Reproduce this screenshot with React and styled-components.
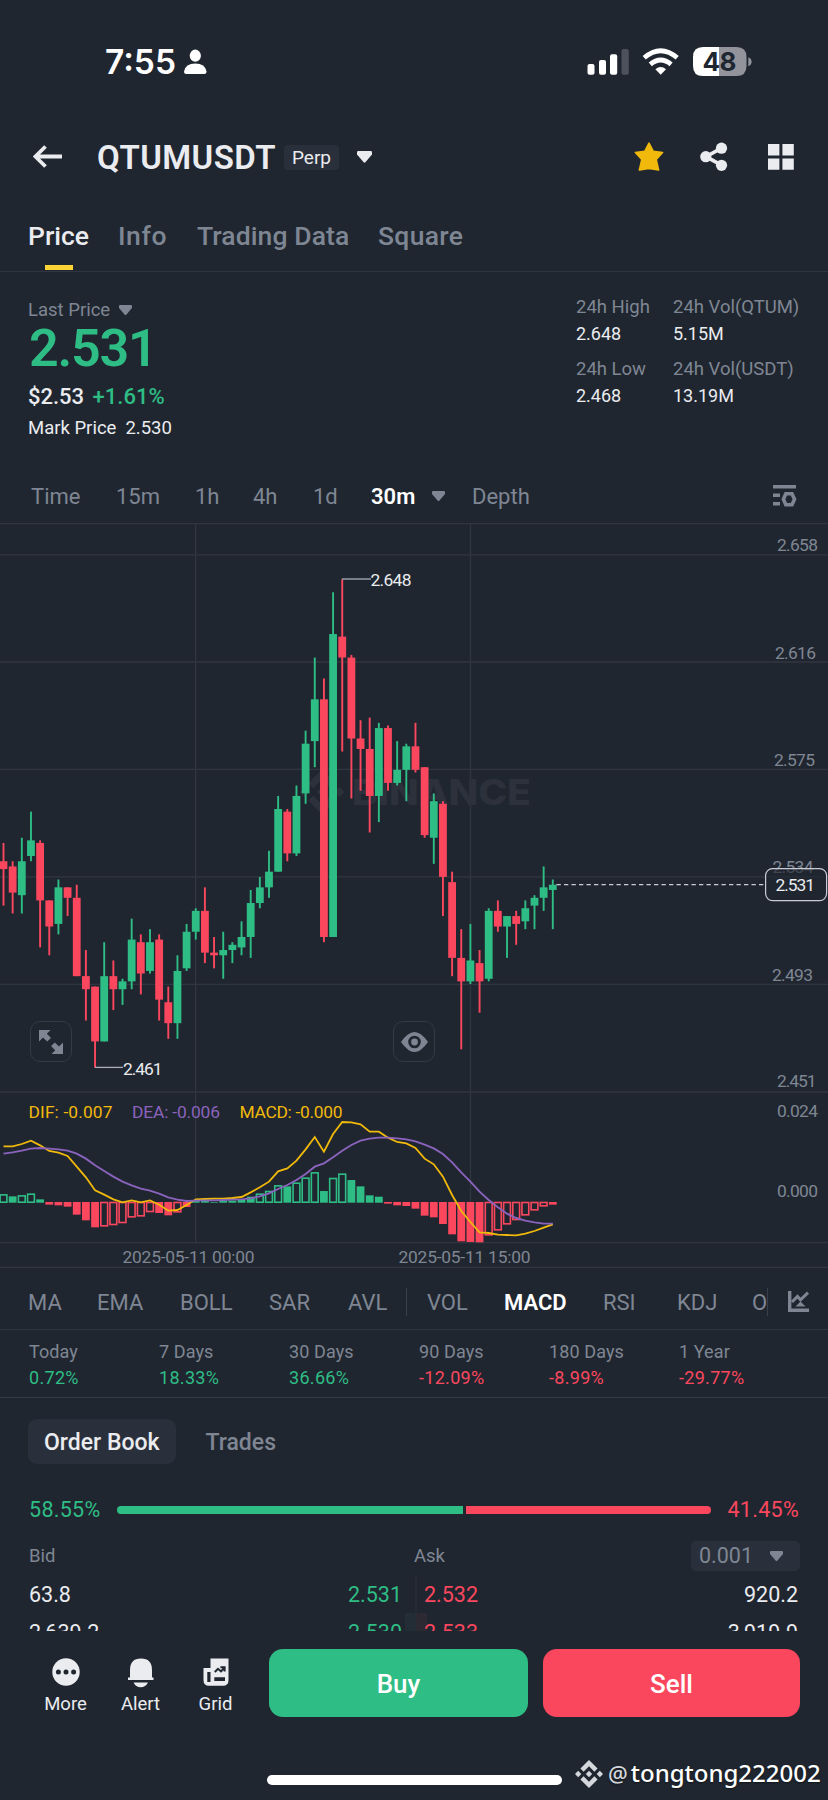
import React from "react";
import styled, { createGlobalStyle } from "styled-components";

const UP = "#2ebd85";
const DOWN = "#fa475e";
const GOLD = "#f0b90b";
const PURPLE = "#8a63bd";
const MUTED = "#7f8693";
const GRID = "#303641";

// high, body top, body bottom, low (price * 1000), 1 = up
const CANDLES = [
  [2547, 2540, 2537, 2523, 0], [2540, 2538, 2528, 2520, 0], [2549, 2540, 2527, 2520, 1],
  [2559, 2548, 2542, 2540, 1], [2548, 2547, 2525, 2507, 0], [2525, 2525, 2515, 2504, 0],
  [2533, 2530, 2516, 2512, 1], [2530, 2530, 2526, 2519, 0], [2531, 2526, 2496, 2496, 0],
  [2506, 2496, 2491, 2479, 0], [2492, 2492, 2471, 2461, 0], [2509, 2496, 2471, 2471, 1],
  [2502, 2496, 2491, 2483, 0], [2495, 2494, 2491, 2485, 1], [2518, 2510, 2494, 2491, 1],
  [2512, 2509, 2497, 2489, 0], [2514, 2509, 2498, 2497, 1], [2512, 2510, 2487, 2479, 0],
  [2492, 2486, 2478, 2472, 0], [2504, 2498, 2478, 2472, 1], [2516, 2513, 2499, 2498, 1],
  [2522, 2521, 2513, 2510, 1], [2530, 2521, 2505, 2501, 0], [2511, 2505, 2504, 2499, 0],
  [2513, 2506, 2504, 2495, 1], [2509, 2508, 2506, 2501, 1], [2517, 2511, 2507, 2504, 1],
  [2529, 2524, 2511, 2503, 1], [2534, 2530, 2524, 2522, 1], [2544, 2536, 2530, 2526, 1],
  [2565, 2560, 2536, 2536, 1], [2560, 2559, 2543, 2540, 0], [2569, 2565, 2543, 2542, 1],
  [2590, 2585, 2566, 2562, 1], [2618, 2602, 2586, 2576, 1], [2610, 2602, 2511, 2509, 0],
  [2643, 2627, 2511, 2511, 1], [2648, 2626, 2618, 2582, 0], [2619, 2618, 2587, 2564, 0],
  [2594, 2587, 2583, 2567, 0], [2595, 2583, 2565, 2551, 0], [2593, 2591, 2565, 2555, 1],
  [2592, 2591, 2570, 2567, 0], [2586, 2575, 2570, 2569, 1], [2585, 2584, 2575, 2563, 1],
  [2593, 2584, 2575, 2574, 0], [2576, 2576, 2550, 2549, 0], [2566, 2563, 2549, 2539, 1],
  [2563, 2562, 2534, 2519, 0], [2536, 2532, 2503, 2496, 0], [2514, 2503, 2494, 2468, 0],
  [2516, 2502, 2494, 2493, 1], [2506, 2501, 2494, 2482, 0], [2522, 2521, 2495, 2494, 1],
  [2525, 2521, 2515, 2513, 0], [2519, 2519, 2515, 2503, 1], [2521, 2519, 2516, 2508, 0],
  [2525, 2522, 2517, 2514, 1], [2527, 2526, 2523, 2514, 1], [2538, 2530, 2526, 2521, 1],
  [2533, 2531, 2529, 2514, 1],
];

// histogram heights in thirds of a pixel, negative is below zero
const HIST = [
  25, 19, 22, 27, 10, -8, -10, -14, -38, -55, -76, -73, -69, -63, -46, -43, -30, -33, -40, -31,
  -15, 5, 5, 2, 5, 6, 10, 18, 27, 35, 52, 49, 60, 75, 91, 35, 74, 87, 68, 49, 22, 18, -5, -10,
  -12, -20, -41, -46, -66, -97, -118, -120, -121, -100, -85, -67, -54, -40, -25, -13, -8,
];
const HOLLOW = [0, 2, 3, 11, 12, 13, 14, 15, 16, 19, 28, 29, 30, 32, 33, 34, 36, 37, 53, 54, 55, 56, 57, 58, 59];

const DIF = [
  169, 169, 162, 152, 166, 183, 188, 198, 230, 262, 301, 314, 328, 337, 331, 337, 331, 344, 362,
  360, 345, 328, 327, 326, 326, 324, 321, 307, 292, 275, 244, 235, 212, 178, 141, 185, 132, 96,
  97, 103, 125, 125, 143, 156, 160, 174, 206, 223, 260, 315, 363, 396, 427, 429, 434, 435, 436,
  431, 423, 413, 403,
];
const DEA = [
  191, 187, 182, 176, 174, 176, 178, 182, 191, 206, 226, 243, 260, 275, 286, 296, 302, 311, 322,
  329, 333, 332, 331, 331, 330, 329, 328, 325, 319, 310, 297, 285, 270, 252, 230, 220, 202, 182,
  165, 152, 146, 143, 143, 145, 148, 154, 164, 175, 192, 217, 247, 275, 305, 330, 352, 371, 384,
  392, 397, 401, 401,
];

const AXIS = [
  ["2.658", 777, 551.3], ["2.616", 775, 658.6], ["2.575", 774, 765.6], ["2.534", 772.5, 873],
  ["2.493", 772, 980.8], ["2.451", 777, 1086.6], ["0.024", 777, 1116.5], ["0.000", 777, 1197],
];

const PERIODS = [
  ["Today", "0.72%"], ["7 Days", "18.33%"], ["30 Days", "36.66%"],
  ["90 Days", "-12.09%"], ["180 Days", "-8.99%"], ["1 Year", "-29.77%"],
];

const candleX = (i) => 3.5 + i * 9.155;
const priceY = (p) => 579.2 + (2648 - p) * 2.6115;
const toPoints = (list) => list.map((v, i) => `${candleX(i)},${1090 + v / 3}`).join(" ");

const Caret = ({ size = 14, color = MUTED }) => (
  <svg width={size} height={(size * 11) / 14} viewBox="0 0 14 11">
    <path
      d="M0 1.2Q0 0 1.2 0H12.8Q14 0 14 1.2V3.2L7.8 10.5Q7 11.3 6.2 10.5L0 3.2Z"
      fill={color}
    />
  </svg>
);

const BINANCE_PATH =
  "M16.624 13.9202l2.7175 2.7154-7.353 7.353-7.353-7.352 2.7175-2.7164 4.6355 4.6595 4.6356-4.6595zm4.6366-4.6366L24 12l-2.7154 2.7164L18.5682 12l2.6924-2.7164zm-9.272.001l2.7163 2.6914-2.7164 2.7174v-.001L9.2721 12l2.7164-2.7154zm-9.2722-.001L5.4088 12l-2.6914 2.6924L0 12l2.7164-2.7164zM11.9885.0115l7.353 7.329-2.7174 2.7154-4.6356-4.6356-4.6355 4.6595-2.7174-2.7154 7.353-7.353z";

const StatusIcons = () => (
  <svg width="166" height="32" viewBox="586 45 166 32">
    <rect x="587.5" y="63" width="7" height="10.8" rx="2" fill="#fff" />
    <rect x="599" y="59" width="7" height="14.8" rx="2" fill="#fff" />
    <rect x="610" y="53.3" width="7.2" height="20.5" rx="2" fill="#fff" />
    <rect x="621.5" y="48" width="7.3" height="25.8" rx="2" fill="#4d515b" />
    <g fill="none" stroke="#fff" strokeWidth="4.8">
      <path d="M644.2 56.8Q660.7 42.6 677.2 56.8" />
      <path d="M650.3 63.4Q660.7 54.6 671.1 63.4" />
    </g>
    <path d="M660.7 73.8L655.4 68.3Q660.7 63.6 666 68.3Z" fill="#fff" />
    <path d="M703 46H719V75H703Q693 75 693 65V56Q693 46 703 46Z" fill="#fff" />
    <path d="M719 46H736.5Q746.5 46 746.5 56V65Q746.5 75 736.5 75H719Z" fill="#92939b" />
    <path d="M748.3 56.2Q751.6 57.5 751.6 60.7Q751.6 63.9 748.3 65.2Z" fill="#92939b" />
    <text
      x="702.5"
      y="70"
      fontFamily="Inter, sans-serif"
      fontSize="26"
      fontWeight="700"
      fill="#202630"
      textLength="34"
    >
      48
    </text>
  </svg>
);

const Chart = () => (
  <ChartSvg viewBox="0 523 828 745">
    <g stroke={GRID} strokeWidth="1.3">
      {[523.7, 554.8, 662, 769.3, 876.9, 984.3, 1092, 1242.6, 1267.4].map((y) => (
        <line key={y} x1="0" x2="828" y1={y} y2={y} />
      ))}
      <line x1="195.6" x2="195.6" y1="523" y2="1242.6" />
      <line x1="470.5" x2="470.5" y1="523" y2="1242.6" />
    </g>
    <g fill="#2c313c">
      <path transform="translate(299.5 769.5) scale(1.87)" d={BINANCE_PATH} />
      <text
        x="352"
        y="805"
        fontFamily="Inter, sans-serif"
        fontSize="35"
        fontWeight="800"
        textLength="179"
        lengthAdjust="spacingAndGlyphs"
      >
        BINANCE
      </text>
    </g>
    {CANDLES.map(([h, t, b, l, up], i) => {
      const x = candleX(i);
      return (
        <g key={i} fill={up ? UP : DOWN}>
          <rect x={x - 0.95} y={priceY(h)} width="1.9" height={priceY(l) - priceY(h)} />
          <rect x={x - 3.9} y={priceY(t)} width="7.8" height={priceY(b) - priceY(t)} />
        </g>
      );
    })}
    <path d="M342 579H371" stroke="#a9aebb" strokeWidth="1.3" />
    <path d="M95 1067.4H123" stroke="#a9aebb" strokeWidth="1.3" />
    <ChartText $light x="370.5" y="585.6" textLength="41">2.648</ChartText>
    <ChartText $light x="123" y="1074.6" textLength="39.5">2.461</ChartText>
    {HIST.map((v, i) => {
      const hollow = HOLLOW.includes(i);
      const color = v > 0 ? UP : DOWN;
      const height = Math.abs(v) / 3;
      const top = v > 0 ? 1202.7 - height : 1202;
      const inset = hollow ? 0.5 : 0;
      return (
        <rect
          key={i}
          x={candleX(i) - 3.9 + inset}
          y={top + inset}
          width={7.8 - inset * 2}
          height={height - inset * 2}
          fill={hollow ? "none" : color}
          stroke={hollow ? color : "none"}
          strokeWidth="1.6"
        />
      );
    })}
    <polyline points={toPoints(DIF)} fill="none" stroke={GOLD} strokeWidth="1.8" />
    <polyline points={toPoints(DEA)} fill="none" stroke={PURPLE} strokeWidth="1.9" />
    <ChartText x="28.5" y="1118.3" textLength="84" fill={GOLD}>DIF: -0.007</ChartText>
    <ChartText x="132" y="1118.3" textLength="88" fill={PURPLE}>DEA: -0.006</ChartText>
    <ChartText x="239.5" y="1118.3" textLength="103" fill={GOLD}>MACD: -0.000</ChartText>
    {AXIS.map(([label, x, y]) => (
      <ChartText key={label} x={x} y={y} textLength={label === "2.451" ? 39.5 : 41}>
        {label}
      </ChartText>
    ))}
    <ChartText x="122.5" y="1263.4" textLength="132">2025-05-11 00:00</ChartText>
    <ChartText x="398.5" y="1263.4" textLength="132">2025-05-11 15:00</ChartText>
    <path d="M556.5 884.6H765" stroke="#c9ccd6" strokeWidth="1.2" strokeDasharray="4.3 3.2" />
    <rect
      x="765.6"
      y="868.6"
      width="61"
      height="32"
      rx="7"
      fill="#202630"
      fillOpacity="0.65"
      stroke="#c9ccd6"
      strokeWidth="1.2"
    />
    <ChartText $light x="775.5" y="891.4" textLength="39.5">2.531</ChartText>
  </ChartSvg>
);

export default function App() {
  return (
    <Screen>
      <GlobalStyle />
      <StatusBar>
        <Clock>7:55</Clock>
        <svg width="23" height="26" viewBox="0 0 23 26">
          <ellipse cx="11.3" cy="6.7" rx="5.6" ry="6.1" fill="#fff" />
          <path d="M0 22.5Q1.5 14.5 11.3 14.5T22.5 22.5Q22.5 25 20 25H2.5Q0 25 0 22.5Z" fill="#fff" />
        </svg>
        <Spacer />
        <StatusIcons />
      </StatusBar>

      <Header>
        <svg width="30" height="24" viewBox="0 0 30 24">
          <path d="M2 11.5H29M12.5 1.5L2.4 11.5L12.5 21.5" fill="none" stroke="#eaecef" strokeWidth="3.8" />
        </svg>
        <Symbol>QTUMUSDT</Symbol>
        <PerpBadge>Perp</PerpBadge>
        <Caret size={15} color="#eaecef" />
        <Spacer />
        <svg width="30" height="30" viewBox="0 0 30 30">
          <path
            d="M15 1.2L19.3 9.4L28.6 10.5L22.2 17.4L24.6 28L15 26.4L5.4 28L7.8 17.4L1.4 10.5L10.7 9.4Z"
            fill={GOLD}
            stroke={GOLD}
            strokeWidth="1.6"
            strokeLinejoin="round"
          />
        </svg>
        <svg width="28" height="30" viewBox="0 0 28 30">
          <path d="M21.5 6.2L6 14.7L21.5 23.2" fill="none" stroke="#eaecef" strokeWidth="3.6" />
          <circle cx="21.5" cy="6.2" r="5.6" fill="#eaecef" />
          <circle cx="5.8" cy="14.7" r="5.6" fill="#eaecef" />
          <circle cx="21.5" cy="23.3" r="5.6" fill="#eaecef" />
        </svg>
        <svg width="26" height="26" viewBox="0 0 26 26">
          <path d="M0 0H11.4V11.4H0ZM14.4 0H25.8V11.4H14.4ZM0 14.4H11.4V25.8H0ZM14.4 14.4H25.8V25.8H14.4Z" fill="#eaecef" />
        </svg>
      </Header>

      <PageTabs>
        <PageTab $active>Price</PageTab>
        <PageTab $spacing={0.6}>Info</PageTab>
        <PageTab $spacing={0.1}>Trading Data</PageTab>
        <PageTab $spacing={0.3}>Square</PageTab>
      </PageTabs>

      <Summary>
        <LastPrice>
          <PriceLabel>
            Last Price <Caret size={13} />
          </PriceLabel>
          <BigPrice>2.531</BigPrice>
          <FiatLine>
            $2.53 <Change>+1.61%</Change>
          </FiatLine>
          <MarkLine>
            <span>Mark Price</span>
            <span>2.530</span>
          </MarkLine>
        </LastPrice>
        <DayStats>
          <Stat>
            <StatLabel>24h High</StatLabel>
            <StatValue>2.648</StatValue>
          </Stat>
          <Stat>
            <StatLabel>24h Vol(QTUM)</StatLabel>
            <StatValue>5.15M</StatValue>
          </Stat>
          <Stat>
            <StatLabel>24h Low</StatLabel>
            <StatValue>2.468</StatValue>
          </Stat>
          <Stat>
            <StatLabel>24h Vol(USDT)</StatLabel>
            <StatValue>13.19M</StatValue>
          </Stat>
        </DayStats>
      </Summary>

      <Intervals>
        <Option>Time</Option>
        <Option>15m</Option>
        <Option>1h</Option>
        <Option>4h</Option>
        <Option>1d</Option>
        <Option $active>30m</Option>
        <Caret size={13} />
        <Option>Depth</Option>
        <svg width="24" height="24" viewBox="0 0 24 24">
          <path d="M0 1H23V4.6H0ZM0 9.5H7V13H0ZM0 18H7V21.5H0Z" fill={MUTED} />
          <path d="M12.8 9.8H19L21.5 15.2L19 20.8H12.8L10.4 15.2Z" fill="none" stroke={MUTED} strokeWidth="3.6" />
        </svg>
      </Intervals>

      <ChartArea>
        <Chart />
        <ChartButton $left={30}>
          <svg width="24" height="24" viewBox="0 0 24 24">
            <path
              d="M0 0H11.5L7.8 3.7L12 8L8.2 11.6L4 7.6L0 11.5ZM24 24H12.5L16.2 20.3L12 16L15.8 12.4L20 16.4L24 12.5Z"
              fill={MUTED}
            />
          </svg>
        </ChartButton>
        <ChartButton $left={393}>
          <svg width="27" height="22" viewBox="0 0 27 22">
            <path
              fillRule="evenodd"
              d="M0 11Q7 1 13.5 1T27 11Q20 21 13.5 21T0 11ZM13.5 4.7A6.3 6.3 0 1 0 13.5 17.3A6.3 6.3 0 1 0 13.5 4.7Z"
              fill={MUTED}
            />
            <circle cx="13.5" cy="11" r="3.4" fill={MUTED} />
          </svg>
        </ChartButton>
      </ChartArea>

      <Indicators>
        <Option>MA</Option>
        <Option>EMA</Option>
        <Option>BOLL</Option>
        <Option>SAR</Option>
        <Option>AVL</Option>
        <Separator />
        <Option>VOL</Option>
        <Option $active>MACD</Option>
        <Option>RSI</Option>
        <Option>KDJ</Option>
        <Option>O</Option>
        <Separator />
        <svg width="22" height="22" viewBox="0 0 22 22">
          <path d="M0 0H3.4V17.6H21V21H0Z" fill={MUTED} />
          <path d="M4 11L9.5 5.5L12.5 8.8L20 1.6" fill="none" stroke={MUTED} strokeWidth="3" />
          <path d="M12.5 10.5L17.5 15.5H7.5Z" fill={MUTED} />
        </svg>
      </Indicators>

      <Periods>
        {PERIODS.map(([label, value]) => (
          <div key={label}>
            <PeriodLabel>{label}</PeriodLabel>
            <PeriodValue $down={value.startsWith("-")}>{value}</PeriodValue>
          </div>
        ))}
      </Periods>

      <BookTabs>
        <BookTab $active>Order Book</BookTab>
        <BookTab>Trades</BookTab>
      </BookTabs>

      <Ratio>
        <RatioText $color={UP}>58.55%</RatioText>
        <RatioBar>
          <RatioPart $color={UP} style={{ flexGrow: 58.55 }} />
          <RatioPart $color={DOWN} style={{ flexGrow: 41.45 }} />
        </RatioBar>
        <RatioText $color={DOWN}>41.45%</RatioText>
      </Ratio>

      <BookHead>
        <span>Bid</span>
        <span>Ask</span>
        <Precision>
          0.001 <Caret size={13} />
        </Precision>
      </BookHead>

      <BookRows>
        <BookRow>
          <span>63.8</span>
          <BookPrice $color={UP}>2.531</BookPrice>
          <BookPrice $color={DOWN}>2.532</BookPrice>
          <span>920.2</span>
        </BookRow>
        <BookRow $depth>
          <span>2,639.2</span>
          <BookPrice $color={UP}>2.530</BookPrice>
          <BookPrice $color={DOWN}>2.533</BookPrice>
          <span>3,919.9</span>
        </BookRow>
      </BookRows>

      <ActionBar>
        <Action>
          <svg width="28" height="28" viewBox="0 0 28 28">
            <circle cx="14" cy="14" r="13.7" fill="#eaecef" />
            <g fill="#202630">
              <circle cx="6.4" cy="14" r="2.5" />
              <circle cx="14" cy="14" r="2.5" />
              <circle cx="21.6" cy="14" r="2.5" />
            </g>
          </svg>
          More
        </Action>
        <Action>
          <svg width="28" height="30" viewBox="0 0 28 30">
            <path d="M1 19.5H3V12Q3 0.5 14 0.5T25 12V19.5H26.5V22H1Z" fill="#eaecef" />
            <path d="M6.5 24.6H21Q18.5 29.3 13.7 29.3T6.5 24.6Z" fill="#eaecef" />
          </svg>
          Alert
        </Action>
        <Action>
          <svg width="26" height="28" viewBox="0 0 26 28">
            <path d="M7.5 0.5H25.5V22Q25.5 27.8 20 27.8H6Q0.5 27.8 0.5 22V10H7.5Z" fill="#eaecef" />
            <path d="M4.3 14H7.5V24H4.3ZM11.3 19.3H22V23H11.3Z" fill="#202630" />
            <path d="M11.8 14L15 10.8L18 13.4L21.4 9.8M17.4 9.2H21.6V13.4" fill="none" stroke="#202630" strokeWidth="2" />
          </svg>
          Grid
        </Action>
        <TradeButton $color={UP}>Buy</TradeButton>
        <TradeButton $color={DOWN}>Sell</TradeButton>
      </ActionBar>

      <Footer>
        <HomeIndicator />
        <Credit>
          <svg width="28" height="28" viewBox="0 0 24 24">
            <path d={BINANCE_PATH} fill="#d4d7db" />
          </svg>
          <At>@</At>
          <span>tongtong222002</span>
        </Credit>
      </Footer>
    </Screen>
  );
}

const GlobalStyle = createGlobalStyle`
  * {
    box-sizing: border-box;
  }
  body {
    margin: 0;
    background: #202630;
  }
  svg {
    display: block;
    flex-shrink: 0;
  }
`;
const Screen = styled.div`
  width: 828px;
  height: 1800px;
  display: flex;
  flex-direction: column;
  overflow: hidden;
  background: #202630;
  color: #eaecef;
  font-family: Roboto, "Liberation Sans", sans-serif;
  font-size: 18.5px;
  white-space: nowrap;
`;
const Spacer = styled.div`
  flex: 1;
`;
const StatusBar = styled.div`
  height: 124px;
  flex-shrink: 0;
  display: flex;
  align-items: center;
  padding: 0 76px 0 105px;
`;
const Clock = styled.div`
  width: 79px;
  color: #fff;
  font-family: Inter, sans-serif;
  font-size: 33.5px;
  font-weight: 600;
`;
const Header = styled.div`
  height: 66px;
  flex-shrink: 0;
  display: flex;
  align-items: center;
  padding: 0 34px 0 33px;

  > svg:nth-last-of-type(2) {
    margin-left: 36px;
  }
  > svg:last-of-type {
    margin-left: 40px;
  }
`;
const Symbol = styled.div`
  width: 187px;
  margin-left: 34px;
  font-size: 33px;
  font-weight: 600;
  letter-spacing: 0.4px;
`;
const PerpBadge = styled.div`
  width: 55px;
  height: 25px;
  margin-right: 18px;
  border-radius: 4px;
  background: #2a303b;
  font-size: 19px;
  line-height: 26px;
  text-align: center;
`;
const PageTabs = styled.div`
  height: 82px;
  flex-shrink: 0;
  display: grid;
  grid-template-columns: 90px 79px 181px 1fr;
  justify-items: start;
  padding: 28px 28px 0;
  border-bottom: 1px solid ${GRID};
`;
const PageTab = styled.div`
  position: relative;
  height: 53px;
  color: ${(p) => (p.$active ? "#eaecef" : MUTED)};
  font-size: 26.5px;
  font-weight: 500;
  letter-spacing: ${(p) => p.$spacing || 0}px;
  line-height: 35px;

  &::after {
    content: "";
    display: ${(p) => (p.$active ? "block" : "none")};
    position: absolute;
    bottom: 1px;
    left: 50%;
    width: 28px;
    height: 5px;
    margin-left: -14px;
    background: #fcd535;
  }
`;
const Summary = styled.div`
  height: 197px;
  flex-shrink: 0;
  display: flex;
  justify-content: space-between;
  padding: 0 28px;
`;
const LastPrice = styled.div`
  padding-top: 26px;
`;
const PriceLabel = styled.div`
  display: flex;
  align-items: center;
  gap: 9px;
  color: ${MUTED};
  line-height: 24px;
`;
const BigPrice = styled.div`
  margin-left: 1px;
  color: ${UP};
  font-size: 52px;
  font-weight: 600;
  line-height: 53px;
  letter-spacing: -1.2px;
`;
const FiatLine = styled.div`
  margin-top: 9px;
  font-size: 22px;
  font-weight: 500;
  line-height: 26px;
`;
const Change = styled.span`
  margin-left: 3px;
  color: ${UP};
`;
const MarkLine = styled.div`
  display: flex;
  gap: 9px;
  margin-top: 6px;
  line-height: 24px;
`;
const DayStats = styled.div`
  display: grid;
  grid-template-columns: 97px 127px;
  align-content: start;
  row-gap: 9px;
  padding-top: 22px;
`;
const Stat = styled.div`
  line-height: 26.5px;
`;
const StatLabel = styled.div`
  color: ${MUTED};
`;
const StatValue = styled.div`
  font-size: 18px;
`;
const Option = styled.div`
  overflow: hidden;
  color: ${(p) => (p.$active ? "#fff" : MUTED)};
  font-size: 22px;
  font-weight: ${(p) => (p.$active ? 600 : 400)};
`;
const Intervals = styled.div`
  height: 54px;
  flex-shrink: 0;
  display: grid;
  grid-template-columns: 85px 79px 58px 60px 58px 61px 40px 301px 24px;
  align-items: center;
  padding-left: 31px;
`;
const ChartArea = styled.div`
  position: relative;
  height: 745px;
  flex-shrink: 0;
`;
const ChartSvg = styled.svg`
  width: 828px;
  height: 745px;
`;
const ChartText = styled.text`
  fill: ${(p) => (p.$light ? "#eaecef" : p.fill || MUTED)};
  font-family: Roboto, sans-serif;
  font-size: 17.4px;
`;
const ChartButton = styled.div`
  position: absolute;
  top: 498px;
  left: ${(p) => p.$left}px;
  width: 42px;
  height: 41px;
  display: flex;
  align-items: center;
  justify-content: center;
  border: 1.5px solid #343a46;
  border-radius: 10px;
  background: #202630;
`;
const Indicators = styled.div`
  height: 62px;
  flex-shrink: 0;
  display: grid;
  grid-template-columns: 69px 83px 89px 79px 58px 21px 77px 99px 74px 75px 15px 21px 22px;
  align-items: center;
  padding: 7px 0 0 28px;
  border-bottom: 1px solid ${GRID};
`;
const Separator = styled.div`
  width: 1px;
  height: 28px;
  background: #3a404b;
`;
const Periods = styled.div`
  height: 68px;
  flex-shrink: 0;
  display: grid;
  grid-template-columns: repeat(6, 130px);
  padding: 8px 0 0 29px;
  border-bottom: 1px solid #333945;
  font-size: 18px;
  line-height: 27px;
`;
const PeriodLabel = styled.div`
  color: ${MUTED};
  letter-spacing: 0.1px;
`;
const PeriodValue = styled.div`
  color: ${(p) => (p.$down ? DOWN : UP)};
  letter-spacing: 0.3px;
  line-height: 26px;
`;
const BookTabs = styled.div`
  display: flex;
  flex-shrink: 0;
  gap: 14px;
  padding: 21px 28px 0;
`;
const BookTab = styled.div`
  height: 45px;
  padding: 1px 16px 0;
  border-radius: 9px;
  background: ${(p) => (p.$active ? "#2a303b" : "transparent")};
  color: ${(p) => (p.$active ? "#eaecef" : MUTED)};
  font-size: 23px;
  font-weight: 500;
  line-height: 46px;
`;
const Ratio = styled.div`
  flex-shrink: 0;
  display: flex;
  align-items: center;
  justify-content: space-between;
  height: 31px;
  margin-top: 30px;
  padding: 0 29px;
`;
const RatioText = styled.div`
  color: ${(p) => p.$color};
  font-size: 21.5px;
  letter-spacing: 0.3px;
`;
const RatioBar = styled.div`
  display: flex;
  gap: 3px;
  width: 594px;
  height: 8px;
  border-radius: 4px;
  overflow: hidden;
`;
const RatioPart = styled.div`
  background: ${(p) => p.$color};
`;
const BookHead = styled.div`
  flex-shrink: 0;
  display: grid;
  grid-template-columns: 385px 1fr 109px;
  align-items: center;
  height: 30px;
  margin-top: 16px;
  padding: 0 28px 0 29px;
  color: ${MUTED};
  line-height: 24px;
`;
const Precision = styled.div`
  display: flex;
  align-items: center;
  justify-content: space-between;
  height: 30px;
  padding: 0 17px 0 8px;
  border-radius: 5px;
  background: #2a303b;
  font-size: 21.5px;
`;
const BookRows = styled.div`
  flex-shrink: 0;
  height: 56px;
  margin-top: 4px;
  padding: 0 29px;
  overflow: hidden;
`;
const BookRow = styled.div`
  display: grid;
  grid-template-columns: 200px 173px 200px 1fr;
  align-items: center;
  height: 38px;
  font-size: 21.5px;
  background: ${(p) =>
    p.$depth
      ? "linear-gradient(90deg, transparent 376px, #232d35 376px 387px, #2d2933 387px 398px, transparent 398px)"
      : "linear-gradient(90deg, transparent 386px, #282a33 386px 388px, transparent 388px)"};

  > :last-child {
    padding-right: 1px;
    text-align: right;
  }
  > :nth-child(2) {
    text-align: right;
  }
  > :nth-child(3) {
    padding-left: 22px;
  }
`;
const BookPrice = styled.span`
  color: ${(p) => p.$color};
`;
const ActionBar = styled.div`
  flex-shrink: 0;
  display: grid;
  grid-template-columns: 75px 75px 75px 259px 256px;
  height: 86px;
  padding: 18px 0 0 29px;
`;
const Action = styled.div`
  display: flex;
  flex-direction: column;
  justify-content: space-between;
  align-items: center;
  padding-top: 9px;
  margin-left: -1px;
  margin-right: 1px;
  height: 65px;
  line-height: 20px;
`;
const TradeButton = styled.div`
  height: 68px;
  margin-left: 15px;
  margin-right: -15px;
  border-radius: 14px;
  background: ${(p) => p.$color};
  color: #fff;
  font-size: 26px;
  font-weight: 500;
  line-height: 71px;
  text-align: center;

  & + & {
    margin-left: 30px;
    margin-right: -31px;
  }
`;
const Footer = styled.div`
  height: 83px;
  display: flex;
  align-items: flex-start;
  padding-left: 267px;
`;
const HomeIndicator = styled.div`
  width: 295px;
  height: 10px;
  margin-top: 58px;
  border-radius: 5px;
  background: #fff;
`;
const Credit = styled.div`
  display: flex;
  align-items: center;
  height: 34px;
  margin: 40px 0 0 13px;
  color: #fff;
  font-family: "Noto Sans", sans-serif;
  font-size: 24px;
  font-weight: 500;
  line-height: 30px;
  text-shadow: 0 1px 2px rgba(0, 0, 0, 0.5);

  > span {
    margin-top: -2px;
  }
`;
const At = styled.span`
  margin: 0 3px 0 5px;
  color: #d4d7db;
  font-size: 22px;
`;
